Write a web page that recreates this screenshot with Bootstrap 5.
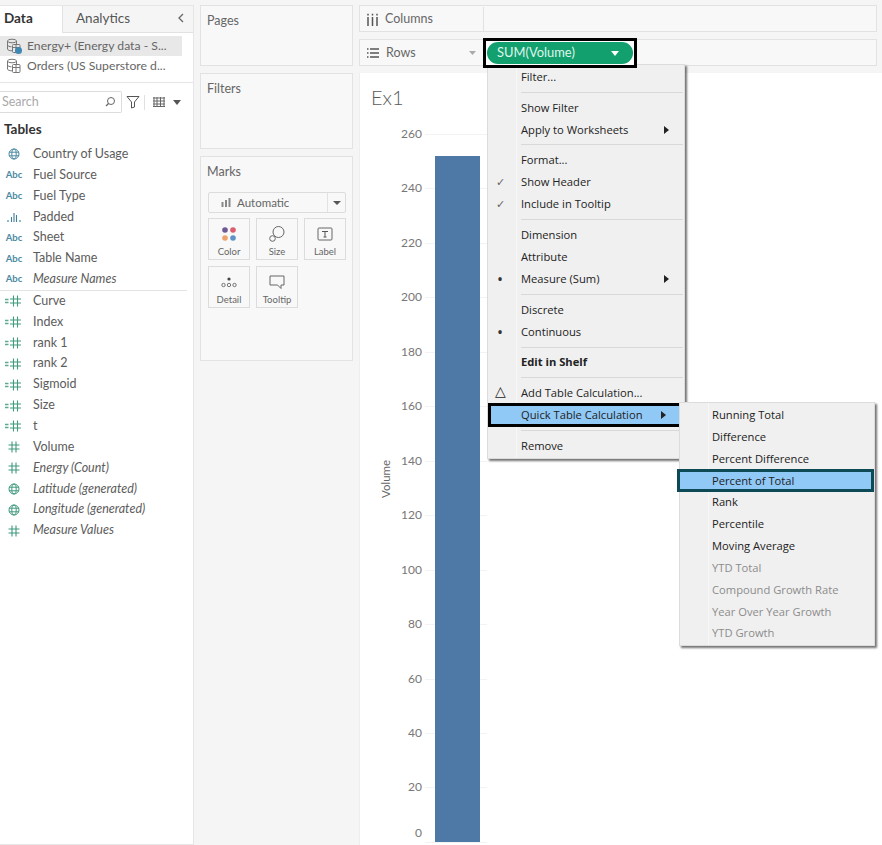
<!DOCTYPE html>
<html lang="en">
<head>
<meta charset="UTF-8">
<meta name="viewport" content="width=device-width, initial-scale=1.0">
<title>Quick Table Calculation</title>
<link href="https://cdn.jsdelivr.net/npm/bootstrap@5.3.0/dist/css/bootstrap.min.css" rel="stylesheet">
<style>
    html, body { height: 100%; }
    body { background: #f5f5f5; font-family: "Lato", "Liberation Sans", sans-serif; font-size: 12.5px; color: #555; overflow: hidden; }
    .app { position: relative; width: 882px; height: 845px; padding-top: 5px; overflow: hidden; }

    /* left data pane */
    .side-pane { width: 194px; background: #fff; border: 1px solid #e6e6e6; border-left: 0; flex: none; height: 840px; }
    .pane-tabs { height: 27px; }
    .pane-tab { font-size: 13.5px; line-height: 25px; color: #555; }
    .pane-tab.on { width: 62px; padding-left: 4px; font-weight: 700; color: #333; }
    .pane-tab.off { flex: 1; padding-left: 13px; background: #f5f5f5; border-left: 1px solid #e2e2e2; border-bottom: 1px solid #e2e2e2; }
    .src-list { height: 50px; border-bottom: 1px solid #e6e6e6; padding-top: 3px; }
    .src-row { height: 20px; width: 182px; padding-left: 6px; gap: 5px; color: #666; font-size: 12.2px; white-space: nowrap; }
    .src-row.on { background: #e8e8e8; }
    .find-row { height: 22px; margin-top: 8px; }
    .find-box { width: 122px; height: 22px; border: 1px solid #dcdcdc; border-left: 0; border-radius: 0 2px 2px 0; padding: 0 5px 0 2px; color: #aaa; }
    .tables-head { font-size: 13.5px; font-weight: 700; color: #333; margin: 6px 0 5px 4px; line-height: 20px; }
    .field-row { height: 20.85px; white-space: nowrap; color: #5c5c5c; }
    .field-ico { width: 33px; flex: none; display: flex; justify-content: center; padding-right: 6px; }
    .field-ico.abc { font-size: 9.5px; font-weight: 700; color: #4b8aa3; padding-right: 5px; }
    .field-split { border-top: 1px solid #e4e4e4; margin: 0 6px 0 0; }

    /* middle cards */
    .mid-col { width: 153px; margin-left: 6px; flex: none; gap: 7px; }
    .panel-box { background: #f8f8f8; border: 1px solid #e2e2e2; border-radius: 0; padding: 7px 6px; color: #666; }
    .panel-box .panel-name { font-size: 12.5px; line-height: 16px; }
    .pages-box { height: 61px; }
    .filters-box { height: 76px; }
    .marks-box { height: 205px; }
    .mark-type { height: 21px; margin-top: 12px; margin-left: 1px; background: #f8f8f8; border: 1px solid #dcdcdc; border-radius: 2px; font-size: 11.5px; width: 138px; }
    .mark-type .mark-name { flex: 1; padding-left: 12px; gap: 6px; }
    .mark-type .mark-arrow { width: 18px; border-left: 1px solid #e2e2e2; height: 100%; }
    .mark-grid { display: grid; grid-template-columns: 42px 42px 42px; gap: 6px 6px; margin-top: 5px; margin-left: 1px; }
    .mark-btn { height: 42px; background: #f8f8f8; border: 1px solid #dcdcdc; font-size: 9.5px; line-height: 12px; color: #666; padding-bottom: 1px; }
    .mark-btn svg { height: 18px; margin-bottom: 3px; }

    /* shelves + view */
    .main-col { width: 523px; margin-left: 6px; flex: none; gap: 7px; }
    .shelf-row { height: 27px; width: 518px; background: #f8f8f8; border: 1px solid #e2e2e2; padding-top: 1px; }
    .shelf-name { width: 124px; flex: none; border-right: 1px solid #e2e2e2; padding-left: 7px; gap: 7px; color: #666; height: 100%; }
    .shelf-arrow { margin-left: auto; margin-right: 7px; }
    .sum-frame { position: absolute; left: 483px; top: 38px; width: 154px; height: 30px; border: 3px solid #000; padding: 1px; background: #fff; z-index: 5; }
    .sum-pill { background: #13a06f; color: #dff5ea; height: 100%; border-radius: 11px; padding: 0 10px; font-size: 12.9px; }
    .view-box { flex: 1; background: #fff; border-left: 1px solid #eee; padding: 14px 0 0 11px; height: 772px; overflow: hidden; }
    .view-title { font-size: 20px; line-height: 20px; color: #5a5a5a; font-weight: 300; }
    .chart-wrap { margin-top: 27px; margin-left: 6px; position: relative; }
    .axis-name { width: 19px; flex: none; writing-mode: vertical-rl; transform: rotate(180deg); text-align: center; font-size: 11.5px; height: 690px; color: #666; }
    .plot-area { position: relative; flex: 1; }
    .tick-row { height: 54.46px; }
    .tick-label { width: 26px; text-align: right; margin-top: -9px; line-height: 18px; font-size: 12px; color: #777; flex: none; }
    .tick-line { width: 62px; margin-left: 3px; border-top: 1px solid #f3f3f3; }
    .tick-row.last { height: 2px; }
    .tick-row.last .tick-label { margin-top: -18px; }
    .bar-mark { position: absolute; left: 39px; top: 22px; width: 45px; height: 686px; background: #4e79a7; }

    /* context menus */
    .ctx-menu { position: absolute; display: block; margin: 0; min-width: 0; border: 1px solid #dcdcdc; border-radius: 0; background: #f0f0f0; box-shadow: 2px 2px 2px rgba(0,0,0,.55); font-family: "Open Sans", "Liberation Sans", sans-serif; font-size: 11.2px; z-index: 4; }
    .menu-one { left: 487px; top: 64px; width: 198px; height: 395px; padding: 1px 0 0 0; }
    .menu-two { left: 679px; top: 402px; width: 196px; height: 244px; padding: 1px 0 0 0; z-index: 6; }
    .ctx-menu::before { content: ""; position: absolute; left: 28px; top: 0; bottom: 0; border-left: 1px solid #f7f7f7; }
    .ctx-item { position: relative; height: 22px; line-height: 22px; padding: 0 0 0 33px; color: #222; white-space: nowrap; }
    .menu-two .ctx-item { height: 21.85px; padding-left: 32px; }
    .ctx-item.off { color: #8c8c8c; }
    .ctx-item .ctx-mark { position: absolute; left: 5px; top: 0; width: 14px; text-align: center; font-size: 11px; color: #666; }
    .ctx-item .ctx-dot { font-size: 16px; color: #333; }
    .ctx-item .ctx-sub { position: absolute; right: 15px; top: 7px; border-left: 5px solid #222; border-top: 4px solid transparent; border-bottom: 4px solid transparent; }
    .ctx-item .ctx-delta { font-size: 14px; color: #222; top: -2px; }
    .ctx-gap { height: 1px; margin: 3.800px 1px 3.900px 33px; background: #d8d8d8; opacity: 1; border: 0; }
    .menu-one .pick-black { background: #90c8f6; outline: 3px solid #000; outline-offset: -2px; z-index: 2; width: 192px; margin-left: 1px; padding-left: 32px; }
    .menu-two .pick-teal { background: #90c8f6; outline: 3px solid #0d4a55; outline-offset: -2px; margin-left: -2px; width: 195px; padding-left: 34px; z-index: 2; }
</style>
</head>
<body>
<svg width="0" height="0" class="position-absolute">
    <symbol id="i-globe" viewBox="0 0 12 12"><g fill="none" stroke="currentColor" stroke-width="1"><circle cx="6" cy="6" r="5"/><ellipse cx="6" cy="6" rx="2.2" ry="5"/><path d="M1 4.2h10M1 7.8h10"/></g></symbol>
    <symbol id="i-hash" viewBox="0 0 12 12"><path d="M4 .5v11M8 .5v11M.5 4h11M.5 8h11" fill="none" stroke="currentColor" stroke-width="1.1"/></symbol>
    <symbol id="i-calc" viewBox="0 0 18 12"><path d="M8.500 .5v11M12.500 .5v11M5 4h11M5 8h11" fill="none" stroke="currentColor" stroke-width="1.100"/><path d="M0 4.500h3.500M0 7.500h3.500" stroke="#5fa892" stroke-width="1.300"/></symbol>
    <symbol id="i-db" viewBox="0 0 16 16"><g fill="none" stroke="#777" stroke-width="1"><ellipse cx="6" cy="3" rx="4.500" ry="1.800"/><path d="M1.500 3v8c0 1 2 1.800 4.500 1.800M10.500 3v3"/><path d="M1.500 7c0 1 2 1.800 4 1.800"/><rect x="6.500" y="6.500" width="7.500" height="8" rx="1"/><path d="M6.500 9.500h7.500M10 6.500v8"/></g></symbol>
</svg>

<div class="app d-flex">
    <aside class="side-pane d-flex flex-column">
        <div class="pane-tabs d-flex">
            <div class="pane-tab on">Data</div>
            <div class="pane-tab off d-flex justify-content-between">Analytics
                <svg width="20" height="26" viewBox="0 0 20 26"><path d="M10 8l-4 4 4 4" fill="none" stroke="#666" stroke-width="1.300"/></svg>
            </div>
        </div>
        <div class="src-list">
            <div class="src-row on d-flex align-items-center">
                <span class="position-relative d-inline-flex"><svg width="16" height="16"><use href="#i-db"/></svg><svg class="position-absolute bottom-0 end-0" width="7" height="7"><circle cx="3.500" cy="3.500" r="3.500" fill="#3f88b4"/></svg></span>
                <span>Energy+ (Energy data - S...</span>
            </div>
            <div class="src-row d-flex align-items-center">
                <svg width="16" height="16"><use href="#i-db"/></svg>
                <span>Orders (US Superstore d...</span>
            </div>
        </div>
        <div class="find-row d-flex align-items-center">
            <div class="find-box d-flex align-items-center justify-content-between">Search
                <svg width="12" height="12" viewBox="0 0 12 12"><circle cx="7" cy="5" r="3.500" fill="none" stroke="#666"/><path d="M4.500 7.500L2 10" stroke="#666" stroke-width="1.200"/></svg>
            </div>
            <svg class="ms-1" width="14" height="14" viewBox="0 0 14 14"><path d="M1 1.500h12L8.500 7v5l-3 1V7z" fill="none" stroke="#555"/></svg>
            <span class="border-start ms-1 me-2" style="height:15px"></span>
            <svg width="12" height="10" viewBox="0 0 12 10"><path d="M0 1h12M0 4h12M0 7h12M0 9.500h12M1 0v10M4 0v10M7.500 0v10M11 0v10" stroke="#666" stroke-width="1"/></svg>
            <svg class="ms-2" width="8" height="5" viewBox="0 0 8 5"><path d="M0 0h8L4 5z" fill="#555"/></svg>
        </div>
        <div class="tables-head">Tables</div>

        <div class="field-row d-flex align-items-center"><span class="field-ico"><svg width="12" height="12" color="#4b8aa3"><use href="#i-globe"/></svg></span>Country of Usage</div>
        <div class="field-row d-flex align-items-center"><span class="field-ico abc">Abc</span>Fuel Source</div>
        <div class="field-row d-flex align-items-center"><span class="field-ico abc">Abc</span>Fuel Type</div>
        <div class="field-row d-flex align-items-center"><span class="field-ico"><svg width="14" height="10" viewBox="0 0 14 10"><path d="M1 8v2M4.500 5v5M7 1v9M9.500 3v7M13 8v2" stroke="#3f7f9b" stroke-width="1.100"/></svg></span>Padded</div>
        <div class="field-row d-flex align-items-center"><span class="field-ico abc">Abc</span>Sheet</div>
        <div class="field-row d-flex align-items-center"><span class="field-ico abc">Abc</span>Table Name</div>
        <div class="field-row d-flex align-items-center"><span class="field-ico abc">Abc</span><em>Measure Names</em></div>
        <div class="field-split"></div>
        <div class="field-row d-flex align-items-center"><span class="field-ico"><svg width="18" height="12" color="#3f9a7e"><use href="#i-calc"/></svg></span>Curve</div>
        <div class="field-row d-flex align-items-center"><span class="field-ico"><svg width="18" height="12" color="#3f9a7e"><use href="#i-calc"/></svg></span>Index</div>
        <div class="field-row d-flex align-items-center"><span class="field-ico"><svg width="18" height="12" color="#3f9a7e"><use href="#i-calc"/></svg></span>rank 1</div>
        <div class="field-row d-flex align-items-center"><span class="field-ico"><svg width="18" height="12" color="#3f9a7e"><use href="#i-calc"/></svg></span>rank 2</div>
        <div class="field-row d-flex align-items-center"><span class="field-ico"><svg width="18" height="12" color="#3f9a7e"><use href="#i-calc"/></svg></span>Sigmoid</div>
        <div class="field-row d-flex align-items-center"><span class="field-ico"><svg width="18" height="12" color="#3f9a7e"><use href="#i-calc"/></svg></span>Size</div>
        <div class="field-row d-flex align-items-center"><span class="field-ico"><svg width="18" height="12" color="#3f9a7e"><use href="#i-calc"/></svg></span>t</div>
        <div class="field-row d-flex align-items-center"><span class="field-ico"><svg width="12" height="12" color="#3f9a7e"><use href="#i-hash"/></svg></span>Volume</div>
        <div class="field-row d-flex align-items-center"><span class="field-ico"><svg width="12" height="12" color="#3f9a7e"><use href="#i-hash"/></svg></span><em>Energy (Count)</em></div>
        <div class="field-row d-flex align-items-center"><span class="field-ico"><svg width="12" height="12" color="#3f9a7e"><use href="#i-globe"/></svg></span><em>Latitude (generated)</em></div>
        <div class="field-row d-flex align-items-center"><span class="field-ico"><svg width="12" height="12" color="#3f9a7e"><use href="#i-globe"/></svg></span><em>Longitude (generated)</em></div>
        <div class="field-row d-flex align-items-center"><span class="field-ico"><svg width="12" height="12" color="#3f9a7e"><use href="#i-hash"/></svg></span><em>Measure Values</em></div>
    </aside>

    <div class="mid-col d-flex flex-column">
        <div class="panel-box pages-box"><div class="panel-name">Pages</div></div>
        <div class="panel-box filters-box"><div class="panel-name">Filters</div></div>
        <div class="panel-box marks-box">
            <div class="panel-name">Marks</div>
            <div class="mark-type d-flex align-items-center">
                <div class="mark-name d-flex align-items-center"><svg width="10" height="9" viewBox="0 0 10 9"><path d="M1.500 4v5M5 2v7M8.500 0v9" stroke="#888" stroke-width="2"/></svg>Automatic</div>
                <div class="mark-arrow d-flex align-items-center justify-content-center"><svg width="8" height="4" viewBox="0 0 8 4"><path d="M0 0h8L4 4z" fill="#555"/></svg></div>
            </div>
            <div class="mark-grid">
                <div class="mark-btn d-flex flex-column align-items-center justify-content-end">
                    <svg width="16" height="16" viewBox="0 0 16 16"><circle cx="4" cy="4" r="2.800" fill="#6b5a94"/><circle cx="12" cy="4" r="2.800" fill="#dc5d6d"/><circle cx="4" cy="12" r="2.800" fill="#eea26c"/><circle cx="12" cy="12" r="2.800" fill="#5f93c5"/></svg>Color</div>
                <div class="mark-btn d-flex flex-column align-items-center justify-content-end">
                    <svg width="16" height="18" viewBox="0 0 16 18"><circle cx="9.500" cy="7" r="5.500" fill="none" stroke="#666"/><circle cx="3.500" cy="13.500" r="2.800" fill="#f8f8f8" stroke="#666"/></svg>Size</div>
                <div class="mark-btn d-flex flex-column align-items-center justify-content-end">
                    <svg width="16" height="18" viewBox="0 0 16 18"><rect x="1" y="3" width="14" height="12" rx="1" fill="none" stroke="#666"/><path d="M5 6.500h6M8 6.500v5.500M6.500 12h3" fill="none" stroke="#555"/></svg>Label</div>
                <div class="mark-btn d-flex flex-column align-items-center justify-content-end">
                    <svg width="16" height="16" viewBox="0 0 16 16"><circle cx="8" cy="5" r="1.600" fill="#444"/><g fill="none" stroke="#555" stroke-width=".8"><circle cx="2.500" cy="11" r="1.700"/><circle cx="8" cy="11" r="1.700"/><circle cx="13.500" cy="11" r="1.700"/></g></svg>Detail</div>
                <div class="mark-btn d-flex flex-column align-items-center justify-content-end">
                    <svg width="16" height="16" viewBox="0 0 16 16"><path d="M1 2h14v9h-3v3.500L8.500 11H1z" fill="none" stroke="#666"/></svg>Tooltip</div>
            </div>
        </div>
    </div>

    <div class="main-col d-flex flex-column">
        <div class="shelf-row d-flex align-items-center">
            <div class="shelf-name d-flex align-items-center">
                <svg width="11" height="13" viewBox="0 0 11 13"><path d="M1 4v9M5.500 4v9M10 4v9" stroke="#555" stroke-width="1.500"/><path d="M1 .8v1.600M5.500 .8v1.600M10 .8v1.600" stroke="#555" stroke-width="1.500"/></svg>Columns
            </div>
        </div>
        <div class="shelf-row d-flex align-items-center">
            <div class="shelf-name d-flex align-items-center">
                <svg width="12" height="10" viewBox="0 0 12 10"><path d="M3 1h9M3 5h9M3 9h9M0 1h1.500M0 5h1.500M0 9h1.500" stroke="#555" stroke-width="1.400"/></svg>Rows
                <svg class="shelf-arrow" width="7" height="4" viewBox="0 0 7 4"><path d="M0 0h7L3.500 4z" fill="#aaa"/></svg>
            </div>
        </div>
        <div class="view-box">
            <div class="view-title">Ex1</div>
            <div class="chart-wrap d-flex">
                <div class="axis-name">Volume</div>
                <div class="plot-area">
                    <div class="tick-row d-flex"><span class="tick-label">260</span><span class="tick-line"></span></div>
                    <div class="tick-row d-flex"><span class="tick-label">240</span><span class="tick-line"></span></div>
                    <div class="tick-row d-flex"><span class="tick-label">220</span><span class="tick-line"></span></div>
                    <div class="tick-row d-flex"><span class="tick-label">200</span><span class="tick-line"></span></div>
                    <div class="tick-row d-flex"><span class="tick-label">180</span><span class="tick-line"></span></div>
                    <div class="tick-row d-flex"><span class="tick-label">160</span><span class="tick-line"></span></div>
                    <div class="tick-row d-flex"><span class="tick-label">140</span><span class="tick-line"></span></div>
                    <div class="tick-row d-flex"><span class="tick-label">120</span><span class="tick-line"></span></div>
                    <div class="tick-row d-flex"><span class="tick-label">100</span><span class="tick-line"></span></div>
                    <div class="tick-row d-flex"><span class="tick-label">80</span><span class="tick-line"></span></div>
                    <div class="tick-row d-flex"><span class="tick-label">60</span><span class="tick-line"></span></div>
                    <div class="tick-row d-flex"><span class="tick-label">40</span><span class="tick-line"></span></div>
                    <div class="tick-row d-flex"><span class="tick-label">20</span><span class="tick-line"></span></div>
                    <div class="tick-row last d-flex"><span class="tick-label">0</span><span class="tick-line"></span></div>
                    <div class="bar-mark"></div>
                </div>
            </div>
        </div>
    </div>

    <div class="sum-frame"><div class="sum-pill d-flex align-items-center justify-content-between"><span>SUM(Volume)</span><svg class="me-1" width="8" height="5" viewBox="0 0 8 5"><path d="M0 0h8L4 5z" fill="#fff"/></svg></div></div>

    <div class="ctx-menu menu-one">
        <div class="ctx-item">Filter...</div>
        <hr class="ctx-gap">
        <div class="ctx-item">Show Filter</div>
        <div class="ctx-item">Apply to Worksheets<span class="ctx-sub"></span></div>
        <hr class="ctx-gap">
        <div class="ctx-item">Format...</div>
        <div class="ctx-item"><span class="ctx-mark">✓</span>Show Header</div>
        <div class="ctx-item"><span class="ctx-mark">✓</span>Include in Tooltip</div>
        <hr class="ctx-gap">
        <div class="ctx-item">Dimension</div>
        <div class="ctx-item">Attribute</div>
        <div class="ctx-item"><span class="ctx-mark ctx-dot">•</span>Measure (Sum)<span class="ctx-sub"></span></div>
        <hr class="ctx-gap">
        <div class="ctx-item">Discrete</div>
        <div class="ctx-item"><span class="ctx-mark ctx-dot">•</span>Continuous</div>
        <hr class="ctx-gap">
        <div class="ctx-item fw-bold">Edit in Shelf</div>
        <hr class="ctx-gap">
        <div class="ctx-item"><span class="ctx-mark ctx-delta">△</span>Add Table Calculation...</div>
        <div class="ctx-item pick-black">Quick Table Calculation<span class="ctx-sub"></span></div>
        <hr class="ctx-gap">
        <div class="ctx-item">Remove</div>
    </div>

    <div class="ctx-menu menu-two">
        <div class="ctx-item">Running Total</div>
        <div class="ctx-item">Difference</div>
        <div class="ctx-item">Percent Difference</div>
        <div class="ctx-item pick-teal">Percent of Total</div>
        <div class="ctx-item">Rank</div>
        <div class="ctx-item">Percentile</div>
        <div class="ctx-item">Moving Average</div>
        <div class="ctx-item off">YTD Total</div>
        <div class="ctx-item off">Compound Growth Rate</div>
        <div class="ctx-item off">Year Over Year Growth</div>
        <div class="ctx-item off">YTD Growth</div>
    </div>
</div>
<script src="https://cdn.jsdelivr.net/npm/bootstrap@5.3.0/dist/js/bootstrap.bundle.min.js"></script>
</body>
</html>
